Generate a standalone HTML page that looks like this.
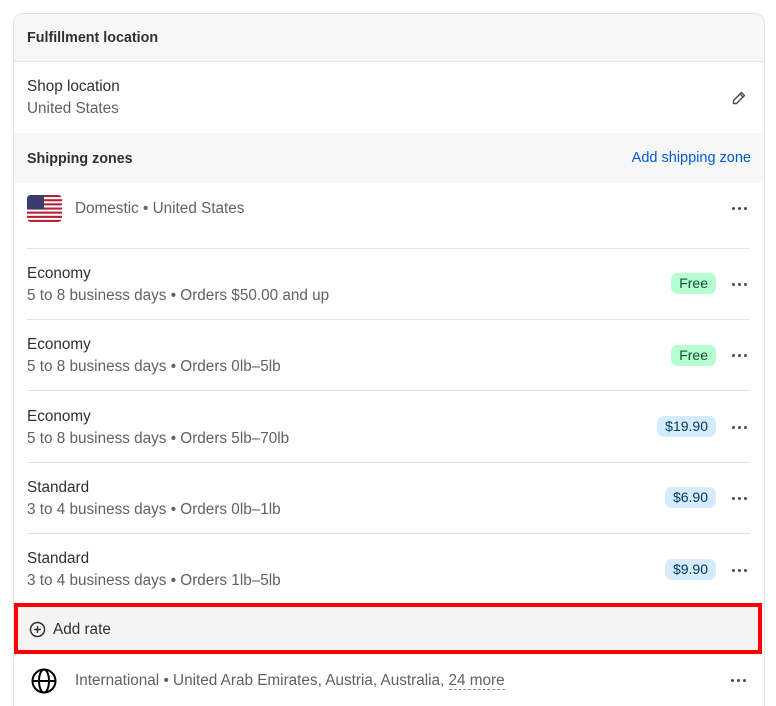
<!DOCTYPE html>
<html><head><style>
*{box-sizing:border-box;margin:0;padding:0}
html,body{width:776px;height:706px;overflow:hidden}
body{background:#fff;font-family:"Liberation Sans",sans-serif;font-size:15.3px;color:#303030;position:relative}
.card{position:absolute;left:13px;top:13px;width:752px;height:720px;border:1px solid #e3e3e3;border-radius:10px;overflow:hidden;background:#fff}
.abs{position:absolute;white-space:nowrap}
.hdr{position:absolute;left:0;width:100%;background:#f7f7f7}
.b{font-weight:bold;color:#303030;font-size:14.3px}
.g{color:#616161}
.div{position:absolute;left:13px;width:723px;height:1px;background:#e3e3e3}
.dots{position:absolute;right:16px;width:16px;height:3px}
.dots i{position:absolute;top:0;width:3px;height:3px;border-radius:50%;background:#4a4a4a}
.badge{position:absolute;height:21px;line-height:21px;padding:0 8px;border-radius:7px;font-size:14px}
.free{background:#b4fed2;color:#0c5132}
.price{background:#d5ebff;color:#003a5a}
</style></head><body>
<div class="card">
 <div class="hdr" style="top:0;height:48px;border-bottom:1px solid #e3e3e3"></div>
 <div class="abs b" style="left:13px;top:16px">Fulfillment location</div>
 <div class="abs" style="left:13px;top:64px">Shop location</div>
 <div class="abs g" style="left:13px;top:86px">United States</div>
 <svg class="abs" style="left:717px;top:76px" width="16" height="16" viewBox="0 0 16 16" fill="none" stroke="#4a4a4a" stroke-width="1.4" stroke-linejoin="round"><path d="M10.5 2.5l3 3L5.5 13.5H2.5v-3z"/><path d="M9 4l3 3"/></svg>
 <div class="hdr" style="top:119px;height:50px"></div>
 <div class="abs b" style="left:13px;top:137px">Shipping zones</div>
 <div class="abs" style="right:13px;top:136px;color:#005bd3;font-size:14.5px">Add shipping zone</div>
 <svg class="abs" style="left:13px;top:181px;border-radius:4px" width="35" height="27" viewBox="0 0 35 27">
  <rect width="35" height="27" fill="#fff"/>
  <g fill="#b22234"><rect y="0" width="35" height="2.1"/><rect y="4.2" width="35" height="2.1"/><rect y="8.3" width="35" height="2.1"/><rect y="12.5" width="35" height="2.1"/><rect y="16.6" width="35" height="2.1"/><rect y="20.8" width="35" height="2.1"/><rect y="24.9" width="35" height="2.1"/></g>
  <rect width="17" height="14.5" fill="#3c3b6e"/>
 </svg>
 <div class="abs g" style="left:61px;top:186px">Domestic • United States</div>
 <div class="dots" style="top:193px"><i style="left:0"></i><i style="left:6px"></i><i style="left:12px"></i></div>
 <div class="div" style="top:234px"></div>

 <div class="abs" style="left:13px;top:251px">Economy</div>
 <div class="abs g" style="left:13px;top:273px">5 to 8 business days • Orders $50.00 and up</div>
 <div class="badge free" style="right:48px;top:259px">Free</div>
 <div class="dots" style="top:269px"><i style="left:0"></i><i style="left:6px"></i><i style="left:12px"></i></div>
 <div class="div" style="top:305px"></div>

 <div class="abs" style="left:13px;top:322px">Economy</div>
 <div class="abs g" style="left:13px;top:344px">5 to 8 business days • Orders 0lb–5lb</div>
 <div class="badge free" style="right:48px;top:331px">Free</div>
 <div class="dots" style="top:340px"><i style="left:0"></i><i style="left:6px"></i><i style="left:12px"></i></div>
 <div class="div" style="top:376px"></div>

 <div class="abs" style="left:13px;top:394px">Economy</div>
 <div class="abs g" style="left:13px;top:416px">5 to 8 business days • Orders 5lb–70lb</div>
 <div class="badge price" style="right:48px;top:402px">$19.90</div>
 <div class="dots" style="top:412px"><i style="left:0"></i><i style="left:6px"></i><i style="left:12px"></i></div>
 <div class="div" style="top:448px"></div>

 <div class="abs" style="left:13px;top:465px">Standard</div>
 <div class="abs g" style="left:13px;top:487px">3 to 4 business days • Orders 0lb–1lb</div>
 <div class="badge price" style="right:48px;top:473px">$6.90</div>
 <div class="dots" style="top:483px"><i style="left:0"></i><i style="left:6px"></i><i style="left:12px"></i></div>
 <div class="div" style="top:519px"></div>

 <div class="abs" style="left:13px;top:536px">Standard</div>
 <div class="abs g" style="left:13px;top:558px">3 to 4 business days • Orders 1lb–5lb</div>
 <div class="badge price" style="right:48px;top:545px">$9.90</div>
 <div class="dots" style="top:555px"><i style="left:0"></i><i style="left:6px"></i><i style="left:12px"></i></div>
</div>
<div class="abs" style="left:14px;top:603px;width:748px;height:51px;background:#f4f4f4;border:4px solid #f00"></div>
<svg class="abs" style="left:29px;top:621px" width="17" height="17" viewBox="0 0 16 16" fill="none" stroke="#303030" stroke-width="1.4"><circle cx="8" cy="8" r="6.6"/><path d="M8 4.8v6.4M4.8 8h6.4"/></svg>
<div class="abs" style="left:53px;top:621px;color:#303030">Add rate</div>
<svg class="abs" style="left:31px;top:668px" width="26" height="26" viewBox="0 0 26 26" fill="none" stroke="#000" stroke-width="2"><circle cx="13" cy="13" r="11.5"/><ellipse cx="13" cy="13" rx="5" ry="11.5"/><path d="M1.5 13h23"/></svg>
<div class="abs g" style="left:75px;top:672px">International • United Arab Emirates, Austria, Australia, <span style="border-bottom:1px dashed #8a8a8a">24 more</span></div>
<div class="dots" style="top:679px;right:29px"><i style="left:0"></i><i style="left:6px"></i><i style="left:12px"></i></div>
</body></html>
